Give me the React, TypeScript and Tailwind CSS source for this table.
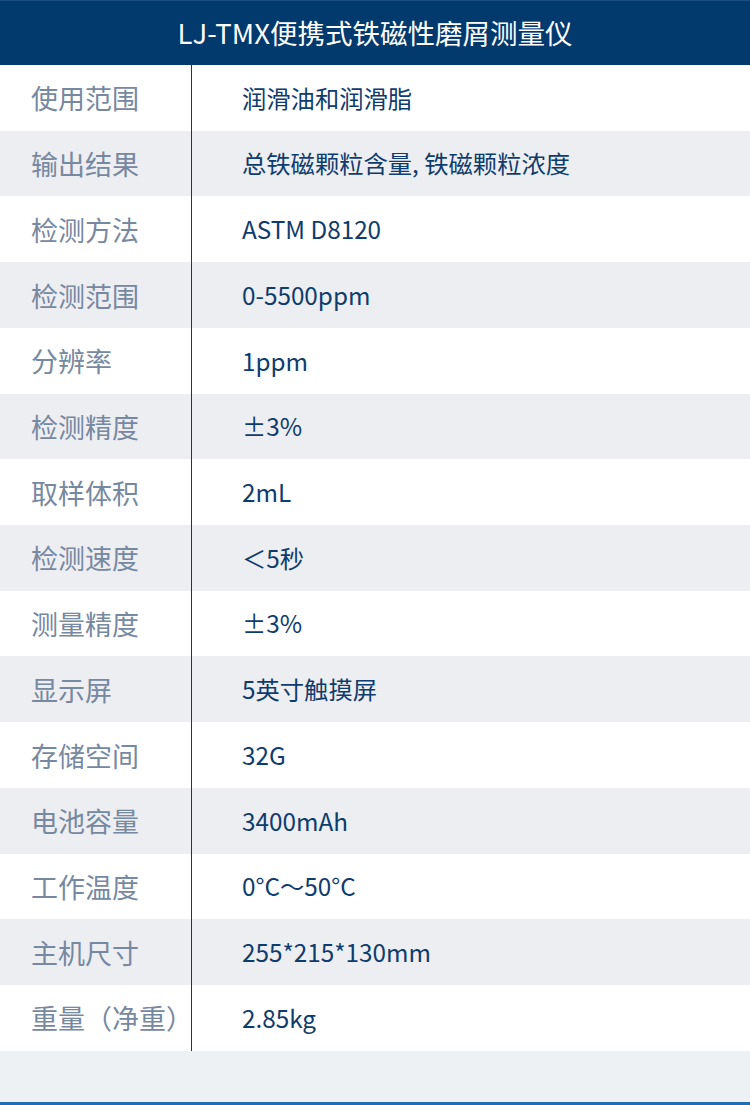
const specs: [string, string][] = [
  ['使用范围', '润滑油和润滑脂'],
  ['输出结果', '总铁磁颗粒含量, 铁磁颗粒浓度'],
  ['检测方法', 'ASTM D8120'],
  ['检测范围', '0-5500ppm'],
  ['分辨率', '1ppm'],
  ['检测精度', '±3%'],
  ['取样体积', '2mL'],
  ['检测速度', '＜5秒'],
  ['测量精度', '±3%'],
  ['显示屏', '5英寸触摸屏'],
  ['存储空间', '32G'],
  ['电池容量', '3400mAh'],
  ['工作温度', '0°C～50°C'],
  ['主机尺寸', '255*215*130mm'],
  ['重量（净重）', '2.85kg'],
];

export default function App() {
  return (
    <div
      className="w-[750px] h-[1105px] bg-[#eef1f4] flex flex-col overflow-hidden"
      style={{ fontFamily: '"Noto Sans CJK SC", "Noto Sans", sans-serif' }}
    >
      {/* Title bar */}
      <div className="h-[65px] shrink-0 bg-[#023a6e] border-t border-[#1b4e80] flex items-center justify-center">
        <h1 className="text-[27.5px] text-white leading-none">LJ-TMX便携式铁磁性磨屑测量仪</h1>
      </div>

      {/* Spec rows */}
      <div className="flex flex-col">
        {specs.map(([label, value], i) => (
          <div
            key={label}
            className={`flex h-[65.73px] ${i % 2 === 0 ? 'bg-white' : 'bg-[#eceef1]'}`}
          >
            <div className="w-[192px] shrink-0 border-r border-[#0c3a6b] flex items-center pl-[31px]">
              <span className="text-[27px] text-[#7788a1] leading-none">{label}</span>
            </div>
            <div className="flex items-center pl-[50px]">
              <span className="text-[24.3px] text-[#0f3c6e] leading-none">{value}</span>
            </div>
          </div>
        ))}
      </div>

      <div className="flex-1" />
      <div className="h-[3px] shrink-0 bg-[#1f6cb4]" />
    </div>
  );
}
